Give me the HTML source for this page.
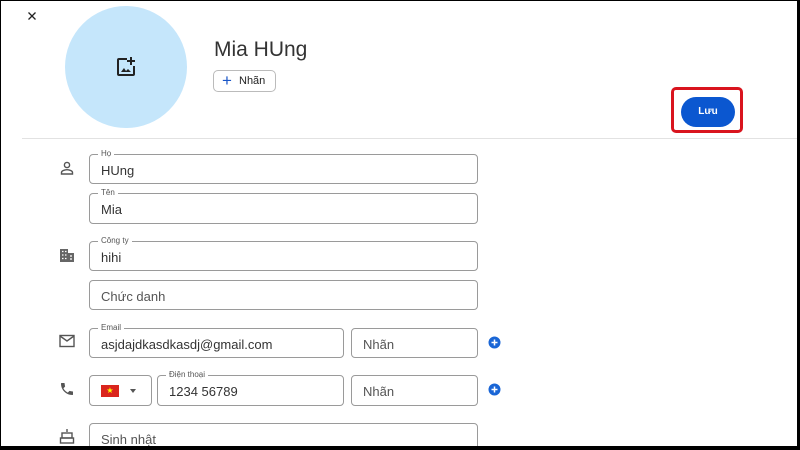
<!DOCTYPE html><html><head><style>
body{margin:0;width:800px;height:450px;overflow:hidden;background:#000;font-family:"Liberation Sans",sans-serif;}
#p{position:absolute;left:1px;top:1px;width:796px;height:445px;background:#fff;overflow:hidden}
.f{position:absolute;border:1px solid #9a9a9a;border-radius:4px;box-sizing:border-box;font-size:13px;color:#333;}
.f span.v{position:absolute;left:11px;top:8px}
.f span.ph{position:absolute;left:11px;top:8px;color:#555}
.f label{position:absolute;left:8px;top:-6px;background:#fff;font-size:8px;color:#555;padding:0 3px;line-height:10px}
.ic{position:absolute}
</style></head><body><div id="p">
<svg class="ic" style="left:24px;top:8px" width="14" height="14" viewBox="0 0 14 14"><path d="M3.5 3.5L10.5 10.5M10.5 3.5L3.5 10.5" stroke="#222" stroke-width="1.3"/></svg>
<div style="position:absolute;left:64px;top:5px;width:122px;height:122px;border-radius:50%;background:#c5e6fb"></div>
<svg class="ic" style="left:114px;top:55px" width="22" height="22" viewBox="0 0 22 22"><path d="M12 3H4a1 1 0 0 0-1 1v14a1 1 0 0 0 1 1h14a1 1 0 0 0 1-1v-8" fill="none" stroke="#222" stroke-width="2"/><path d="M16 1v8M12 5h8" stroke="#222" stroke-width="2"/><path d="M6 16l3-4 2 3 2-2 3 3z" fill="#222"/></svg>
<div style="position:absolute;left:213px;top:37px;font-size:21px;color:#333">Mia HUng</div>
<div style="position:absolute;left:212px;top:69px;width:63px;height:22px;border:1px solid #bbb;border-radius:5px;box-sizing:border-box;font-size:11px;color:#222"><span style="position:absolute;left:8px;top:1px;font-size:17px;color:#1a56c8;line-height:18px">+</span><span style="position:absolute;left:25px;top:4px">Nhãn</span></div>
<div style="position:absolute;left:670px;top:86px;width:72px;height:46px;border:3px solid #d9141e;border-radius:5px;box-sizing:border-box"></div>
<div style="position:absolute;left:680px;top:96px;width:54px;height:30px;border-radius:15px;background:#0b57d0;color:#fff;font-size:10px;font-weight:bold;text-align:center;line-height:30px">Lưu</div>
<div style="position:absolute;left:21px;top:137px;width:780px;height:1px;background:#e2e2e2"></div>
<svg class="ic" style="left:58px;top:159px" width="16" height="16" viewBox="0 0 16 16"><circle cx="8" cy="5" r="2.6" fill="none" stroke="#555" stroke-width="1.4"/><path d="M2.5 14v-1.5c0-1.5 3-2.8 5.5-2.8s5.5 1.3 5.5 2.8V14z" fill="none" stroke="#555" stroke-width="1.4"/></svg>
<div class="f" style="left:88px;top:153px;width:389px;height:30px"><label>Họ</label><span class="v">HUng</span></div>
<div class="f" style="left:88px;top:192px;width:389px;height:31px"><label>Tên</label><span class="v">Mia</span></div>
<svg class="ic" style="left:58px;top:246px" width="16" height="16" viewBox="0 0 16 16"><rect x="1" y="2" width="8" height="13" fill="#666"/><rect x="9" y="6" width="6" height="9" fill="#666"/><path d="M3 4.5h1.5M6 4.5h1.5M3 8h1.5M6 8h1.5M3 11.5h1.5M6 11.5h1.5M11 9h2M11 12h2" stroke="#fff" stroke-width="1.3"/></svg>
<div class="f" style="left:88px;top:240px;width:389px;height:30px"><label>Công ty</label><span class="v">hihi</span></div>
<div class="f" style="left:88px;top:279px;width:389px;height:30px"><span class="ph">Chức danh</span></div>
<svg class="ic" style="left:58px;top:333px" width="16" height="14" viewBox="0 0 16 14"><rect x="1" y="1.5" width="14" height="11" fill="none" stroke="#555" stroke-width="1.4"/><path d="M1 2l7 5 7-5" fill="none" stroke="#555" stroke-width="1.4"/></svg>
<div class="f" style="left:88px;top:327px;width:255px;height:30px"><label>Email</label><span class="v">asjdajdkasdkasdj@gmail.com</span></div>
<div class="f" style="left:350px;top:327px;width:127px;height:30px"><span class="ph">Nhãn</span></div>
<svg class="ic" style="left:487px;top:335px" width="13" height="13" viewBox="0 0 13 13"><circle cx="6.5" cy="6.5" r="6" fill="#1a66d6"/><path d="M6.5 3.5v6M3.5 6.5h6" stroke="#fff" stroke-width="1.5"/></svg>
<svg class="ic" style="left:58px;top:380px" width="16" height="16" viewBox="0 0 24 24"><path d="M6.6 10.8c1.4 2.8 3.8 5.1 6.6 6.6l2.2-2.2c.3-.3.7-.4 1-.2 1.1.4 2.3.6 3.6.6.6 0 1 .4 1 1V20c0 .6-.4 1-1 1C10.6 21 3 13.4 3 4c0-.6.4-1 1-1h3.5c.6 0 1 .4 1 1 0 1.3.2 2.5.6 3.6.1.3 0 .7-.2 1z" fill="#555"/></svg>
<div class="f" style="left:88px;top:374px;width:63px;height:31px"><div style="position:absolute;left:11px;top:9px;width:18px;height:12px;background:#da251d;color:#ff0;font-size:8px;text-align:center;line-height:12px">★</div><div style="position:absolute;left:40px;top:13px;border:3.5px solid transparent;border-top:4px solid #555"></div></div>
<div class="f" style="left:156px;top:374px;width:187px;height:31px"><label>Điện thoại</label><span class="v">1234 56789</span></div>
<div class="f" style="left:350px;top:374px;width:127px;height:31px"><span class="ph">Nhãn</span></div>
<svg class="ic" style="left:487px;top:382px" width="13" height="13" viewBox="0 0 13 13"><circle cx="6.5" cy="6.5" r="6" fill="#1a66d6"/><path d="M6.5 3.5v6M3.5 6.5h6" stroke="#fff" stroke-width="1.5"/></svg>
<svg class="ic" style="left:58px;top:427px" width="16" height="16" viewBox="0 0 16 16"><path d="M8 1v3" stroke="#555" stroke-width="1.4"/><rect x="3" y="5" width="10" height="5" fill="none" stroke="#555" stroke-width="1.4"/><rect x="1.5" y="10" width="13" height="5" fill="none" stroke="#555" stroke-width="1.4"/></svg>
<div class="f" style="left:88px;top:422px;width:389px;height:31px"><span class="ph">Sinh nhật</span></div>
</div></body></html>
